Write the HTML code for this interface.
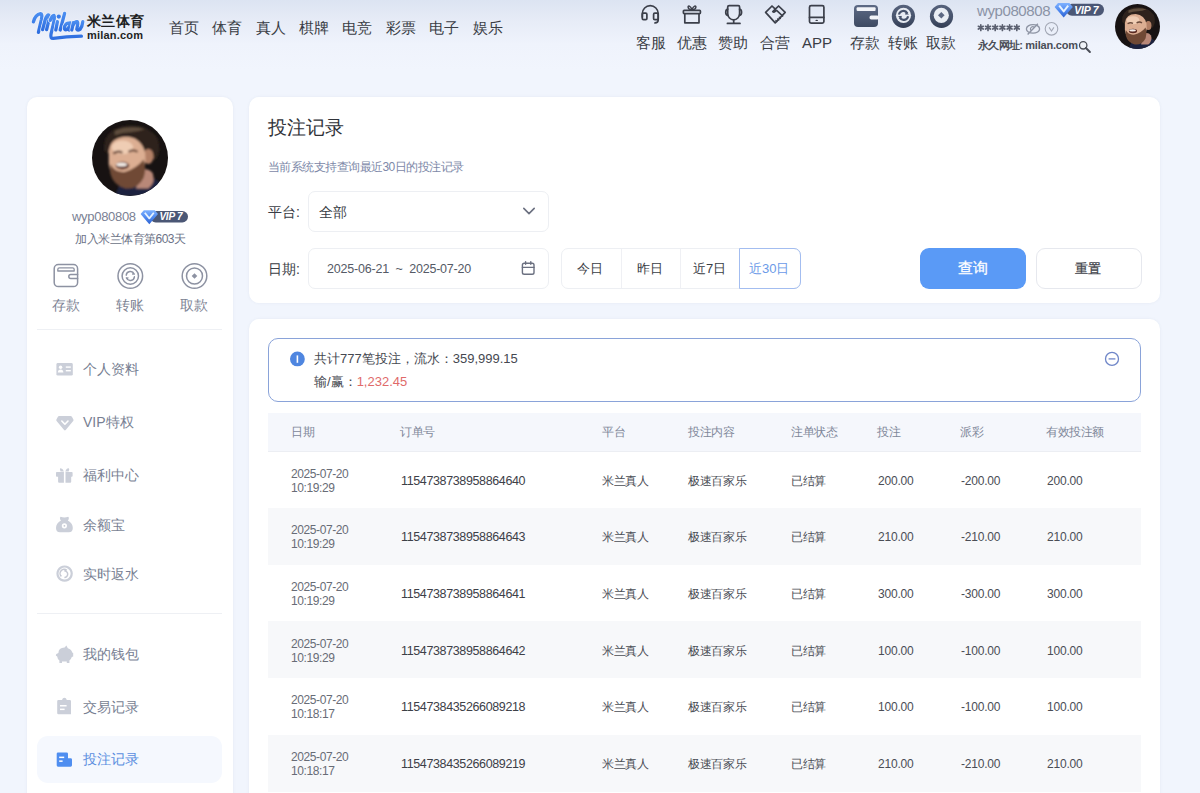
<!DOCTYPE html>
<html><head><meta charset="utf-8">
<style>
*{box-sizing:border-box;margin:0;padding:0}
html,body{width:1200px;height:793px;overflow:hidden}
body{font-family:"Liberation Sans",sans-serif;background:linear-gradient(180deg,#dce4f2 0px,#e7ecf7 22px,#eff3fc 44px,#f1f5fd 70px,#f1f5fd 100%);position:relative;color:#333}
.abs{position:absolute}
.t{position:absolute;white-space:nowrap;line-height:1}
/* header */
.nav{position:absolute;top:19px;font-size:15px;color:#3a3d45;letter-spacing:0px}
.hico{position:absolute;top:4px;width:24px;height:24px}
.hlab{position:absolute;top:35px;font-size:15px;color:#3a3d45;line-height:1;white-space:nowrap}
.card{position:absolute;background:#fff;border-radius:10px;box-shadow:0 0 3px rgba(120,135,160,0.10)}
.menu{position:absolute;left:83px;font-size:14px;color:#787f93;line-height:1;white-space:nowrap}
.mico{position:absolute;left:55px;width:19px;height:19px}
.th{position:absolute;top:426px;font-size:12px;letter-spacing:-0.5px;color:#80879a;line-height:1;white-space:nowrap}
.row{position:absolute;left:268px;width:873px;height:57px}
.row.g{background:#f7f8fa}
.cell{position:absolute;font-size:12px;letter-spacing:-0.3px;color:#4a4d55;line-height:1;white-space:nowrap}
.num{font-size:12.5px;letter-spacing:-0.37px;color:#3d4048}
.num2{font-size:12px;letter-spacing:-0.2px;color:#4a4d55}
.dt{position:absolute;left:291px;font-size:12px;color:#686c76;line-height:14px;letter-spacing:-0.4px}
</style></head><body>
<svg width="0" height="0" style="position:absolute">
 <defs>
  <filter id="blr" x="-20%" y="-20%" width="140%" height="140%"><feGaussianBlur stdDeviation="1.6"/></filter>
  <clipPath id="cc"><circle cx="50" cy="50" r="50"/></clipPath>
  <radialGradient id="skin" cx="0.45" cy="0.4" r="0.6"><stop offset="0" stop-color="#e2b59a"/><stop offset="0.7" stop-color="#c08a6e"/><stop offset="1" stop-color="#8c5c45"/></radialGradient>
 </defs>
 <symbol id="avatar" viewBox="0 0 100 100">
  <g clip-path="url(#cc)">
   <rect width="100" height="100" fill="#171212"/>
   <g filter="url(#blr)">
    <path d="M16,40 Q14,14 42,8 Q72,4 86,24 Q92,40 84,52 L70,50 Q66,30 48,26 Q30,24 22,44 Z" fill="#2e231c"/>
    <path d="M30,14 Q50,6 70,12 Q60,16 50,16 Q40,16 30,20 Z" fill="#5e4d3c"/>
    <path d="M36,86 Q60,82 80,76 Q96,84 100,100 L30,100 Z" fill="#1d2340"/><path d="M64,66 Q74,62 80,70 Q84,82 74,90 L58,90 Q60,76 64,66 Z" fill="#b98878"/>
    
    <ellipse cx="74" cy="48" rx="7" ry="10" fill="#b38066"/>
    <path d="M22,42 Q24,22 46,22 Q66,24 70,44 Q72,62 64,74 Q54,86 40,82 Q24,76 22,58 Z" fill="#dcae92"/>
    <ellipse cx="40" cy="36" rx="14" ry="9" fill="#efcdb4"/>
    <path d="M24,58 Q30,70 44,68 Q58,64 68,52 Q72,64 68,76 Q60,92 44,90 Q28,86 24,70 Z" fill="#6f4a36"/>
    <ellipse cx="40" cy="60" rx="9" ry="5" fill="#5a2a22"/>
    <ellipse cx="39" cy="58.6" rx="7.5" ry="2.6" fill="#f4eee8"/>
    <path d="M28,44 Q34,40 40,43" stroke="#6b4a3a" stroke-width="3" fill="none"/>
    <path d="M48,42 Q54,38 60,42" stroke="#6b4a3a" stroke-width="3" fill="none"/>
   </g>
  </g>
 </symbol>
</svg>

<!-- ============ HEADER ============ -->
<svg class="abs" style="left:0;top:0" width="1200" height="60" viewBox="0 0 1200 60">
 <defs>
  <linearGradient id="lg" x1="0" y1="0" x2="0" y2="1"><stop offset="0" stop-color="#4a8df0"/><stop offset="1" stop-color="#2f6fe0"/></linearGradient>
  <linearGradient id="dk" x1="0" y1="0" x2="0" y2="1"><stop offset="0" stop-color="#5d6a85"/><stop offset="1" stop-color="#3e4a62"/></linearGradient>
  <linearGradient id="gem2" x1="0" y1="0" x2="0" y2="1"><stop offset="0" stop-color="#7fb2ff"/><stop offset="0.55" stop-color="#4b86ef"/><stop offset="1" stop-color="#2f62d0"/></linearGradient>
  <linearGradient id="ring" x1="0" y1="0" x2="0" y2="1"><stop offset="0" stop-color="#56627c"/><stop offset="0.6" stop-color="#46526b"/><stop offset="1" stop-color="#333d54"/></linearGradient>
 </defs>
 <!-- logo -->
 <g fill="none" stroke-linecap="round" stroke-linejoin="round">
  <path d="M33.4,21.8 Q35.2,14.6 40.6,13.6 Q42.6,13.8 41.4,19.6 L38.4,32.4" stroke="#eef2fa" stroke-width="4.6"/><path d="M33.4,21.8 Q35.2,14.6 40.6,13.6 Q42.6,13.8 41.4,19.6 L38.4,32.4" stroke="url(#lg)" stroke-width="3.3"/>
  <path d="M42.6,29.6 L45.2,19.6 Q46.8,15 48.6,15 Q49.8,15.6 49,19.8 L46.6,29.6" stroke="#eef2fa" stroke-width="4.6"/><path d="M42.6,29.6 L45.2,19.6 Q46.8,15 48.6,15 Q49.8,15.6 49,19.8 L46.6,29.6" stroke="url(#lg)" stroke-width="3.3"/>
  <path d="M50.2,20.4 Q52.2,15 54,15.4 Q55,16.4 53.6,23 L51,34.2 Q50.2,38.6 53.2,38.4 Q66,36.4 81.4,36.2" stroke="#eef2fa" stroke-width="4.6"/><path d="M50.2,20.4 Q52.2,15 54,15.4 Q55,16.4 53.6,23 L51,34.2 Q50.2,38.6 53.2,38.4 Q66,36.4 81.4,36.2" stroke="url(#lg)" stroke-width="3.3"/>
  <path d="M57.4,21.6 L55.8,30" stroke="#eef2fa" stroke-width="4.6"/><path d="M57.4,21.6 L55.8,30" stroke="url(#lg)" stroke-width="3.3"/>
  <path d="M64.6,13.4 L60.2,30" stroke="#eef2fa" stroke-width="4.6"/><path d="M64.6,13.4 L60.2,30" stroke="url(#lg)" stroke-width="3.3"/>
  <path d="M70.2,23.4 Q66.4,22.2 64.6,26.4 Q63.8,29.8 65.8,29.8 Q67.8,29.6 69.8,25.8 M70.4,23 L69.2,30" stroke="#eef2fa" stroke-width="4.6"/><path d="M70.2,23.4 Q66.4,22.2 64.6,26.4 Q63.8,29.8 65.8,29.8 Q67.8,29.6 69.8,25.8 M70.4,23 L69.2,30" stroke="url(#lg)" stroke-width="3.3"/>
  <path d="M73.4,22.6 L71.8,30 M73,25.2 Q75.2,21.2 77.2,21.6 Q78.2,22.4 77.4,26 L76.8,29.2 Q77.6,30.8 80,29.4 Q82.4,26.4 82.8,21.6" stroke="#eef2fa" stroke-width="4.6"/><path d="M73.4,22.6 L71.8,30 M73,25.2 Q75.2,21.2 77.2,21.6 Q78.2,22.4 77.4,26 L76.8,29.2 Q77.6,30.8 80,29.4 Q82.4,26.4 82.8,21.6" stroke="url(#lg)" stroke-width="3.3"/>
 </g>
 <circle cx="58.8" cy="16.6" r="2.1" fill="#3a7ce8"/>
 <!-- line icons -->
 <g fill="none" stroke="#3b3f4a" stroke-width="1.7" stroke-linecap="round" stroke-linejoin="round">
  <path d="M642.3,17 V13.6 A7.95,7.95 0 0 1 658.2,13.6 V19.8 Q658.2,22.9 655,22.9"/>
  <rect x="642.3" y="13.2" width="4.6" height="6.5" rx="1.2"/>
  <rect x="653.6" y="13.2" width="4.6" height="6.5" rx="1.2"/>
  <rect x="683.4" y="10.3" width="17" height="3.3" rx="0.8"/>
  <path d="M684.8,13.8 V22.8 H699 V13.8"/>
  <path d="M692,9.8 C690.6,5.6 687.6,5 688.2,7.6 C688.6,9.2 691,9.8 692,9.8 C693,9.8 695.4,9.2 695.8,7.6 C696.4,5 693.4,5.6 692,9.8 Z" stroke-width="1.5"/>
  <path d="M729.2,5.6 H738.3 Q739.6,5.6 739.6,7 V13.6 A5.95,6.2 0 0 1 727.7,13.6 V7 Q727.7,5.6 729.2,5.6 Z"/>
  <path d="M727.7,9.2 A2.4,3.2 0 0 0 727.7,15.5 M739.6,9.2 A2.4,3.2 0 0 1 739.6,15.5"/>
  <path d="M733.7,19.9 V23.4 M727.4,23.4 H740"/>
  <path d="M765.6,12.4 L772,6 L775.3,9.2 L778.6,6 L785.2,12.4 L775.2,22.9 Z"/>
  <path d="M775.3,9.2 L772.8,11.6 Q773.8,12.6 775.2,11.4 L776.6,10.4 L782.6,16" />
  <path d="M777.5,18.8 l1.3,1.3 M779.2,17.2 l1.3,1.3 M775.8,20.4 l1.1,1.1" stroke-width="1.2"/>
  <rect x="809.5" y="5.6" width="14.4" height="17.6" rx="1.6"/>
  <path d="M809.5,17.4 H823.9"/>
 </g>
 <ellipse cx="816.7" cy="20.4" rx="1.3" ry="0.7" fill="#3b3f4a"/>
 <!-- dark wallet -->
 <rect x="854" y="5" width="24" height="22" rx="4" fill="url(#dk)"/>
 <rect x="856.6" y="7.2" width="19" height="3.8" rx="1" fill="#f2f4f8"/>
 <rect x="869.5" y="15.6" width="9.5" height="4" rx="1.8" fill="#f2f4f8"/>
 <!-- transfer -->
 <circle cx="903.4" cy="16.3" r="11.6" fill="url(#ring)"/>
 <circle cx="903.5" cy="15.3" r="7.6" fill="#e7ebf2"/>
 <path d="M898.9,14.6 A4.6,4.6 0 0 1 907.4,13.2 M908.1,16.2 A4.6,4.6 0 0 1 899.6,17.6" stroke="#46526b" stroke-width="2.1" fill="none"/>
 <path d="M905.6,11.6 L909,14.4 L905.2,14.8 Z M901.4,19.2 L898,16.2 L901.8,15.8 Z" fill="#46526b"/>
 <path d="M898.4,15.3 H908.6" stroke="#e7ebf2" stroke-width="0.8"/>
 <!-- withdraw -->
 <circle cx="941.5" cy="16.3" r="11.6" fill="url(#ring)"/>
 <circle cx="941.3" cy="15.3" r="7.6" fill="#e9edf4"/>
 <path d="M941.3,12 L944.6,15.3 L941.3,18.6 L938,15.3 Z" fill="#5d6883"/>
 <!-- VIP badge -->
 <rect x="1066" y="3.8" width="38" height="12" rx="6" fill="#4b5775"/>
 <path d="M1054.6,7 L1058,3 H1069.4 L1072.8,7 L1063.7,17.6 Z" fill="url(#gem2)"/>
 <path d="M1059.2,5.6 L1063.7,11.4 L1068.2,5.6" stroke="#e6f2ff" stroke-width="1.9" fill="none" stroke-linejoin="round"/>
 <text x="1074.2" y="13.6" font-family="Liberation Sans" font-weight="bold" font-style="italic" font-size="10.5" fill="#fff" letter-spacing="-0.2">VIP 7</text>
 <!-- eye slash & chevron circle -->
 <g fill="none" stroke="#8e94a4" stroke-width="1.3">
  <ellipse cx="1033" cy="28.9" rx="6.6" ry="4.3"/>
  <path d="M1027.6,34.4 L1037.9,23.8" stroke-width="1.4"/>
  <path d="M1031.2,30.6 A2,2 0 0 1 1034.4,27.4" stroke-width="1.1"/>
 </g>
 <g fill="none" stroke="#a3a8b5" stroke-width="1.1">
  <circle cx="1051.5" cy="28.8" r="6.3"/>
  <path d="M1049.1,27.4 L1051.5,31 L1053.9,27.4"/>
 </g>
 <path d="M980.80,24.90L980.80,30.50M978.38,26.30L983.22,29.10M983.22,26.30L978.38,29.10M988.00,24.90L988.00,30.50M985.58,26.30L990.42,29.10M990.42,26.30L985.58,29.10M995.20,24.90L995.20,30.50M992.78,26.30L997.62,29.10M997.62,26.30L992.78,29.10M1002.40,24.90L1002.40,30.50M999.98,26.30L1004.82,29.10M1004.82,26.30L999.98,29.10M1009.60,24.90L1009.60,30.50M1007.18,26.30L1012.02,29.10M1012.02,26.30L1007.18,29.10M1016.80,24.90L1016.80,30.50M1014.38,26.30L1019.22,29.10M1019.22,26.30L1014.38,29.10" stroke="#5b6070" stroke-width="1.7" stroke-linecap="round"/>
 <!-- magnifier -->
 <circle cx="1083.2" cy="45.3" r="3.7" fill="#f0f3f8" stroke="#4a4e57" stroke-width="1.3"/>
 <path d="M1085.9,48 L1089.9,52" stroke="#4a4e57" stroke-width="2" stroke-linecap="round"/>
</svg>
<div class="t" style="left:87px;top:14px;font-size:14px;font-weight:bold;color:#1d1f24;letter-spacing:0.3px">米兰体育</div>
<div class="t" style="left:87px;top:30px;font-size:11px;font-weight:bold;color:#1d1f24;letter-spacing:0.2px">milan.com</div>

<div class="nav" style="left:169px">首页</div>
<div class="nav" style="left:212px">体育</div>
<div class="nav" style="left:256px">真人</div>
<div class="nav" style="left:299px">棋牌</div>
<div class="nav" style="left:342px">电竞</div>
<div class="nav" style="left:386px">彩票</div>
<div class="nav" style="left:429px">电子</div>
<div class="nav" style="left:473px">娱乐</div>

<div class="hlab" style="left:636px">客服</div>
<div class="hlab" style="left:677px">优惠</div>
<div class="hlab" style="left:718px">赞助</div>
<div class="hlab" style="left:760px">合营</div>
<div class="hlab" style="left:802px">APP</div>
<div class="hlab" style="left:850px">存款</div>
<div class="hlab" style="left:888px">转账</div>
<div class="hlab" style="left:926px">取款</div>

<div class="t" style="left:977px;top:3px;font-size:15px;letter-spacing:-0.4px;color:#8b93a6">wyp080808</div>
<div class="t" style="left:978px;top:40px;font-size:11px;font-weight:bold;color:#4a4e57"><span style="letter-spacing:-0.7px">永久网址:</span> <span style="letter-spacing:-0.2px">milan.com</span></div>
<svg class="abs" style="left:1115px;top:4px" width="45" height="45" viewBox="0 0 100 100"><use href="#avatar"/></svg>

<!-- ============ SIDEBAR ============ -->
<div class="card" style="left:27px;top:97px;width:206px;height:720px"></div>
<svg class="abs" style="left:92px;top:120px" width="76" height="76" viewBox="0 0 100 100"><use href="#avatar"/></svg>
<div class="t" style="left:72px;top:210px;font-size:13px;letter-spacing:-0.3px;color:#7a8194">wyp080808</div>
<div class="t" style="left:75px;top:233px;font-size:12px;letter-spacing:-0.5px;color:#6b7286">加入米兰体育第603天</div>
<div class="t" style="left:52px;top:298px;font-size:14px;color:#7d8394">存款</div>
<div class="t" style="left:116px;top:298px;font-size:14px;color:#7d8394">转账</div>
<div class="t" style="left:180px;top:298px;font-size:14px;color:#7d8394">取款</div>
<div class="abs" style="left:37px;top:329px;width:185px;height:1px;background:#eef0f4"></div>
<div class="menu" style="top:362px">个人资料</div>
<div class="menu" style="top:415px">VIP特权</div>
<div class="menu" style="top:468px">福利中心</div>
<div class="menu" style="top:518px">余额宝</div>
<div class="menu" style="top:567px">实时返水</div>
<div class="abs" style="left:37px;top:613px;width:185px;height:1px;background:#eef0f4"></div>
<div class="menu" style="top:647px">我的钱包</div>
<div class="menu" style="top:700px">交易记录</div>
<div class="abs" style="left:37px;top:736px;width:185px;height:47px;border-radius:11px;background:#f5f8fe"></div>
<div class="menu" style="top:752px;color:#5a8ee0">投注记录</div>
<svg class="abs" style="left:0;top:0" width="240" height="793" viewBox="0 0 240 793">
 <!-- VIP badge small -->
 <defs><linearGradient id="gem" x1="0" y1="0" x2="0" y2="1"><stop offset="0" stop-color="#7fb2ff"/><stop offset="0.55" stop-color="#4b86ef"/><stop offset="1" stop-color="#2f62d0"/></linearGradient></defs>
 <rect x="150" y="211" width="38" height="11.4" rx="5.7" fill="#4b5775"/>
 <path d="M140.6,214 L143.8,210.2 H154.8 L158,214 L149.3,224.2 Z" fill="url(#gem)"/>
 <path d="M144.8,212.8 L149.3,218.4 L153.8,212.8" stroke="#e6f2ff" stroke-width="1.8" fill="none" stroke-linejoin="round"/>
 <text x="159.4" y="220.3" font-family="Liberation Sans" font-weight="bold" font-style="italic" font-size="10" fill="#fff" letter-spacing="-0.2">VIP 7</text>
 <!-- quick icons -->
 <g fill="none" stroke="#8d92a2" stroke-width="1.5" stroke-linecap="round" stroke-linejoin="round">
  <rect x="54.2" y="264.6" width="23.4" height="22" rx="4.2"/>
  <path d="M57.8,271 V269.4 Q57.8,267.8 59.4,267.8 H72.6 Q74.2,267.8 74.2,269.4 V271 Z" stroke-width="1.3"/>
  <path d="M77.6,274.4 H70.8 Q68.8,274.4 68.8,276.4 Q68.8,278.4 70.8,278.4 H77.6"/>
  <circle cx="130.3" cy="276" r="12.3"/>
  <circle cx="130.3" cy="276" r="8.2"/>
  <path d="M126.2,275.2 A4.2,4.2 0 0 1 134.2,274 M134.4,276.8 A4.2,4.2 0 0 1 126.4,278" stroke-width="1.4"/>
  <circle cx="194.5" cy="276" r="12.3"/>
  <circle cx="194.5" cy="276" r="8"/>
 </g>
 <path d="M132.6,272.4 L134.8,274.6 L132,274.8 Z M128,279.6 L125.8,277.4 L128.6,277.2 Z" fill="#8d92a2"/>
 <path d="M194.5,273.2 L197.3,276 L194.5,278.8 L191.7,276 Z" fill="#8d92a2"/>
 <!-- menu icons -->
 <g fill="#cbcfd9">
  <rect x="56.4" y="363" width="16.4" height="12.6" rx="1.4"/>
  <path d="M59,416 H70.6 Q71.4,416 71.9,416.7 L73.4,419.6 Q73.8,420.4 73.2,421.1 L65.7,430 Q64.9,430.9 64.1,430 L56.6,421.1 Q56,420.4 56.4,419.6 L57.9,416.7 Q58.4,416 59,416 Z"/>
  <path d="M56.8,471.9 H63.9 V476.8 H56.8 Q56,476.8 56,476 V472.7 Q56,471.9 56.8,471.9 Z M65.5,471.9 H71.8 Q72.6,471.9 72.6,472.7 V476 Q72.6,476.8 71.8,476.8 H65.5 Z M58.1,476.8 H63.9 V482.8 H59.1 Q58.1,482.8 58.1,481.8 Z M65.5,476.8 H71.2 V481.8 Q71.2,482.8 70.2,482.8 H65.5 Z M60.2,468.2 Q62.4,467.8 64,471.6 L60.6,471.6 Q59.4,469 60.2,468.2 Z M68.8,468.2 Q66.6,467.8 65.2,471.6 L68.6,471.6 Q69.8,469 68.8,468.2 Z"/>
  <path d="M60.6,516.8 Q64.4,518 68.2,516.8 Q69.4,517.2 68.6,519.6 L67.8,520.6 Q72.8,523.4 72.8,528 Q72.8,532.2 68.8,532.2 H60 Q56,532.2 56,528 Q56,523.4 61,520.6 L60.2,519.6 Q59.4,517.2 60.6,516.8 Z"/>
  <path d="M64.6,565.4 A8.2,8.2 0 1 0 64.61,565.4 Z M64.6,567.6 A6,6 0 1 1 64.59,567.6 Z" fill-rule="evenodd"/>
  <path d="M58.4,653 Q58.4,647.6 64.6,647.4 L66.4,645.4 L67.8,648.2 Q71.8,649.8 72.2,652.4 L73.2,653 V656.4 L71.8,657 Q71,659.6 69.4,660.6 V662.9 H66.8 V661.6 H62 V662.9 H59.4 V660.4 Q57.4,658.8 57.2,656.4 L55.8,655.6 Q55.6,653.8 58.4,653 Z"/>
  <path d="M58.4,700 H62 Q62.6,697.8 64.4,697.8 Q66.2,697.8 66.8,700 H69.8 Q71,700 71,701.2 V714.3 H58.4 Q57.2,714.3 57.2,713.1 V701.2 Q57.2,700 58.4,700 Z"/>
 </g>
 <g fill="#ffffff">
  <circle cx="60.6" cy="367.2" r="1.7"/>
  <path d="M57.8,372.6 Q58,369.6 60.6,369.6 Q63.2,369.6 63.4,372.6 Z"/>
  <rect x="65.8" y="366.4" width="5" height="1.4"/>
  <rect x="65.8" y="370" width="5" height="1.4"/>
  <circle cx="64.4" cy="525.8" r="2.6"/>
  <rect x="60" y="705" width="6.6" height="1.5"/>
  <rect x="60" y="708.6" width="4.6" height="1.5"/>
 </g>
 <path d="M61.8,421 L64.9,424.2 L68,421" stroke="#fff" stroke-width="1.6" fill="none" stroke-linecap="round" stroke-linejoin="round"/>
 <circle cx="64.4" cy="525.8" r="0.9" fill="#c6c9d3"/>
 <path d="M61.4,576.4 A3.6,3.6 0 0 1 66.8,570.4 M64.2,570.8 A3.4,3.4 0 0 1 64.4,577.6" stroke="#c6c9d3" stroke-width="1.5" fill="none"/>
 <!-- active doc icon -->
 <path d="M58,752.4 H66.6 Q68,752.4 68,753.8 V758.2 H70.6 Q72,758.2 72,759.6 V765.3 Q72,766.7 70.6,766.7 H58 Q56.7,766.7 56.7,765.3 V753.8 Q56.7,752.4 58,752.4 Z" fill="#4f8ef0"/>
 <rect x="59.2" y="756.6" width="5" height="1.5" fill="#fff"/>
 <rect x="59.2" y="760.4" width="3.4" height="1.5" fill="#fff"/>
</svg>

<!-- ============ FILTER CARD ============ -->
<div class="card" style="left:249px;top:97px;width:911px;height:206px"></div>
<div class="t" style="left:268px;top:118px;font-size:19px;color:#2f3238">投注记录</div>
<div class="t" style="left:268px;top:161px;font-size:12px;letter-spacing:-0.55px;color:#7d88a8">当前系统支持查询最近30日的投注记录</div>
<div class="t" style="left:268px;top:205px;font-size:14px;color:#3a3d45">平台:</div>
<div class="abs" style="left:308px;top:191px;width:241px;height:41px;border:1px solid #edeff3;border-radius:7px"></div>
<div class="t" style="left:319px;top:205px;font-size:14px;color:#3a3d45">全部</div>
<div class="t" style="left:268px;top:262px;font-size:14px;color:#3a3d45">日期:</div>
<div class="abs" style="left:308px;top:248px;width:241px;height:41px;border:1px solid #edeff3;border-radius:7px"></div>
<div class="t" style="left:327px;top:263px;font-size:12.5px;color:#555a66;letter-spacing:-0.2px">2025-06-21 &nbsp;~ &nbsp;2025-07-20</div>
<div class="abs" style="left:561px;top:248px;width:240px;height:41px;border:1px solid #edeff3;border-radius:7px"></div>
<div class="abs" style="left:621px;top:249px;width:1px;height:39px;background:#eff0f4"></div>
<div class="abs" style="left:680px;top:249px;width:1px;height:39px;background:#eff0f4"></div>
<div class="t" style="left:577px;top:262px;font-size:13px;color:#3a3d45">今日</div>
<div class="t" style="left:637px;top:262px;font-size:13px;color:#3a3d45">昨日</div>
<div class="t" style="left:693px;top:262px;font-size:13px;color:#3a3d45">近7日</div>
<div class="abs" style="left:739px;top:248px;width:62px;height:41px;border:1px solid #a3bdf0;border-radius:0 7px 7px 0"></div>
<div class="t" style="left:749px;top:262px;font-size:13px;color:#6b9ae8">近30日</div>
<div class="abs" style="left:920px;top:248px;width:106px;height:41px;border-radius:9px;background:#5a9af6"></div>
<div class="t" style="left:958px;top:261px;font-size:14.5px;color:#fff;-webkit-text-stroke:0.3px #fff">查询</div>
<div class="abs" style="left:1036px;top:248px;width:106px;height:41px;border:1px solid #e6e8ee;border-radius:9px"></div>
<div class="t" style="left:1075px;top:262px;font-size:13px;color:#3a3d45;-webkit-text-stroke:0.25px #3a3d45">重置</div>

<!-- ============ TABLE CARD ============ -->
<div class="card" style="left:249px;top:319px;width:911px;height:520px"></div>
<div class="abs" style="left:268px;top:338px;width:873px;height:64px;border:1px solid #8aa3d9;border-radius:10px"></div>
<div class="t" style="left:314px;top:352px;font-size:13px;color:#454850">共计777笔投注，流水：359,999.15</div>
<div class="t" style="left:314px;top:375px;font-size:13px;color:#454850">输/赢：<span style="color:#e06a6a">1,232.45</span></div>

<div class="abs" style="left:268px;top:413px;width:873px;height:39px;background:#f5f7fc;border-bottom:1px solid #eceef3"></div>
<div class="th" style="left:291px">日期</div>
<div class="th" style="left:400px">订单号</div>
<div class="th" style="left:602px">平台</div>
<div class="th" style="left:688px">投注内容</div>
<div class="th" style="left:791px">注单状态</div>
<div class="th" style="left:877px">投注</div>
<div class="th" style="left:960px">派彩</div>
<div class="th" style="left:1046px">有效投注额</div>

<svg class="abs" style="left:249px;top:97px" width="911" height="320" viewBox="249 97 911 320">
 <path d="M523.8,208.4 L529,213.6 L534.2,208.4" fill="none" stroke="#6b7080" stroke-width="1.6" stroke-linecap="round" stroke-linejoin="round"/>
 <g fill="none" stroke="#6b7080" stroke-width="1.4" stroke-linecap="round">
  <rect x="522.4" y="263.2" width="11.6" height="11" rx="1.8"/>
  <path d="M522.4,267.4 H534 M525.6,261.6 V264.2 M530.8,261.6 V264.2"/>
 </g>
 <!-- info icon -->
 <circle cx="297.4" cy="358.9" r="7.4" fill="#4f86e0"/>
 <path d="M297.4,355.4 V362.8" stroke="#fff" stroke-width="1.6"/>
 <circle cx="1112" cy="358.9" r="6.5" fill="none" stroke="#6f86c8" stroke-width="1.3"/>
 <path d="M1108.6,358.9 H1115.4" stroke="#6f86c8" stroke-width="1.3"/>
</svg>
<!-- rows -->
<div class="row" style="top:451.30px"></div>
<div class="dt" style="top:466.80px">2025-07-20<br>10:19:29</div>
<div class="cell num" style="left:401px;top:474.80px">1154738738958864640</div>
<div class="cell" style="left:602px;top:474.80px">米兰真人</div>
<div class="cell" style="left:688px;top:474.80px">极速百家乐</div>
<div class="cell" style="left:791px;top:474.80px">已结算</div>
<div class="cell num2" style="left:878px;top:474.80px">200.00</div>
<div class="cell num2" style="left:961px;top:474.80px">-200.00</div>
<div class="cell num2" style="left:1047px;top:474.80px">200.00</div>
<div class="row g" style="top:507.97px"></div>
<div class="dt" style="top:523.47px">2025-07-20<br>10:19:29</div>
<div class="cell num" style="left:401px;top:531.47px">1154738738958864643</div>
<div class="cell" style="left:602px;top:531.47px">米兰真人</div>
<div class="cell" style="left:688px;top:531.47px">极速百家乐</div>
<div class="cell" style="left:791px;top:531.47px">已结算</div>
<div class="cell num2" style="left:878px;top:531.47px">210.00</div>
<div class="cell num2" style="left:961px;top:531.47px">-210.00</div>
<div class="cell num2" style="left:1047px;top:531.47px">210.00</div>
<div class="row" style="top:564.64px"></div>
<div class="dt" style="top:580.14px">2025-07-20<br>10:19:29</div>
<div class="cell num" style="left:401px;top:588.14px">1154738738958864641</div>
<div class="cell" style="left:602px;top:588.14px">米兰真人</div>
<div class="cell" style="left:688px;top:588.14px">极速百家乐</div>
<div class="cell" style="left:791px;top:588.14px">已结算</div>
<div class="cell num2" style="left:878px;top:588.14px">300.00</div>
<div class="cell num2" style="left:961px;top:588.14px">-300.00</div>
<div class="cell num2" style="left:1047px;top:588.14px">300.00</div>
<div class="row g" style="top:621.31px"></div>
<div class="dt" style="top:636.81px">2025-07-20<br>10:19:29</div>
<div class="cell num" style="left:401px;top:644.81px">1154738738958864642</div>
<div class="cell" style="left:602px;top:644.81px">米兰真人</div>
<div class="cell" style="left:688px;top:644.81px">极速百家乐</div>
<div class="cell" style="left:791px;top:644.81px">已结算</div>
<div class="cell num2" style="left:878px;top:644.81px">100.00</div>
<div class="cell num2" style="left:961px;top:644.81px">-100.00</div>
<div class="cell num2" style="left:1047px;top:644.81px">100.00</div>
<div class="row" style="top:677.98px"></div>
<div class="dt" style="top:693.48px">2025-07-20<br>10:18:17</div>
<div class="cell num" style="left:401px;top:701.48px">1154738435266089218</div>
<div class="cell" style="left:602px;top:701.48px">米兰真人</div>
<div class="cell" style="left:688px;top:701.48px">极速百家乐</div>
<div class="cell" style="left:791px;top:701.48px">已结算</div>
<div class="cell num2" style="left:878px;top:701.48px">100.00</div>
<div class="cell num2" style="left:961px;top:701.48px">-100.00</div>
<div class="cell num2" style="left:1047px;top:701.48px">100.00</div>
<div class="row g" style="top:734.65px"></div>
<div class="dt" style="top:750.15px">2025-07-20<br>10:18:17</div>
<div class="cell num" style="left:401px;top:758.15px">1154738435266089219</div>
<div class="cell" style="left:602px;top:758.15px">米兰真人</div>
<div class="cell" style="left:688px;top:758.15px">极速百家乐</div>
<div class="cell" style="left:791px;top:758.15px">已结算</div>
<div class="cell num2" style="left:878px;top:758.15px">210.00</div>
<div class="cell num2" style="left:961px;top:758.15px">-210.00</div>
<div class="cell num2" style="left:1047px;top:758.15px">210.00</div>

</body></html>
